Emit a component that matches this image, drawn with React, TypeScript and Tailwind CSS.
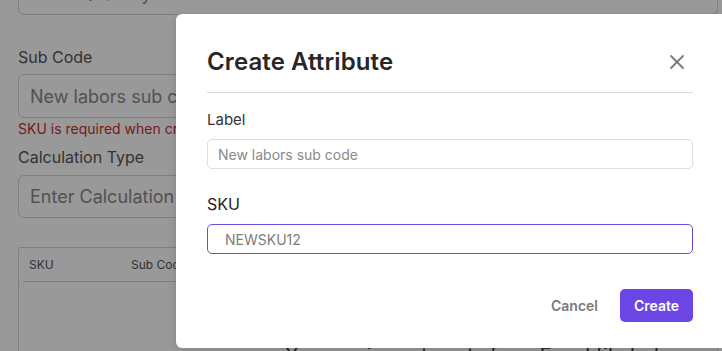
import React from "react";

export default function App() {
  return (
    <div className="relative w-[722px] h-[351px] overflow-hidden bg-white" style={{ fontFamily: "Inter, 'Noto Sans', sans-serif" }}>
      {/* Background page */}
      <div className="flex flex-col pl-[18px] w-[760px]">
        <div className="mt-[-28px] h-[43px] w-[700px] rounded-[6px] border border-[#d4d4d4] px-[11px] flex items-center text-[18px] text-[#888]">
          Enter Quantity
        </div>
        <div className="mt-[32px] text-[16px] leading-[20px] text-[#555]">Sub Code</div>
        <div className="mt-[7px] h-[44px] w-[700px] rounded-[6px] border border-[#d4d4d4] px-[11px] flex items-center text-[18px] text-[#888]">
          New labors sub code
        </div>
        <div className="mt-[1px] text-[14px] leading-[20px] text-[#cc2b2b]">SKU is required when creating a new sub code</div>
        <div className="mt-[8px] text-[16px] leading-[20px] text-[#555]">Calculation Type</div>
        <div className="mt-[8px] h-[43px] w-[700px] rounded-[6px] border border-[#d4d4d4] px-[11px] flex items-center text-[18px] text-[#888]">
          Enter Calculation Type
        </div>
        <div className="mt-[29px] w-[700px] h-[200px] border border-[#d4d4d4] rounded-[2px] px-[4px]">
          <div className="flex items-center h-[34px] border-b border-[#d4d4d4] pl-[6px] text-[12px] text-[#555]">
            <div className="w-[102px]">SKU</div>
            <div>Sub Code</div>
          </div>
          <div className="mt-[61px] pl-[262px] text-[20px] leading-[24px] text-[#333] whitespace-nowrap">You can import costs from Excel file below and</div>
        </div>
      </div>

      {/* Overlay */}
      <div className="absolute inset-0 bg-black/40" />

      {/* Modal */}
      <div className="absolute left-[176px] top-[14px] w-[546px] h-[334px] bg-white rounded-l-[6px] shadow-[0_2px_8px_rgba(0,0,0,0.15)] pl-[31px] pr-[29px] pt-[32px] flex flex-col">
        <div className="flex items-center justify-between h-[32px]">
          <div className="text-[24px] leading-[32px] font-semibold text-[#272727] tracking-[0.1px]">Create Attribute</div>
          <svg width="16" height="16" viewBox="0 0 16 16" className="mr-[8px]">
            <path d="M2 2 L14 14 M14 2 L2 14" stroke="#7a7a7a" strokeWidth="1.8" strokeLinecap="round" />
          </svg>
        </div>
        <div className="mt-[14px] h-px bg-[#dcdcdc]" />
        <div className="mt-[15px] text-[15px] leading-[24px] text-[#333]">Label</div>
        <div className="mt-[7px] h-[30px] rounded-[5px] border border-[#dedede] pl-[10px] flex items-center text-[14px] text-[#8a8a8a]">
          New labors sub code
        </div>
        <div className="mt-[23px] text-[16px] leading-[24px] text-[#222]">SKU</div>
        <div className="mt-[8px] h-[30px] rounded-[5px] border-[1.5px] border-[#6d4ae6] pl-[17px] flex items-center text-[14px] text-[#7d7d7d]">
          NEWSKU12
        </div>
        <div className="mt-[35px] flex items-center justify-end gap-[22px]">
          <div className="text-[14px] font-semibold text-[#7a7a7a]">Cancel</div>
          <div className="h-[33px] w-[73px] rounded-[5px] bg-[#6b46e5] flex items-center justify-center text-[14px] font-semibold text-white">
            Create
          </div>
        </div>
      </div>
    </div>
  );
}
